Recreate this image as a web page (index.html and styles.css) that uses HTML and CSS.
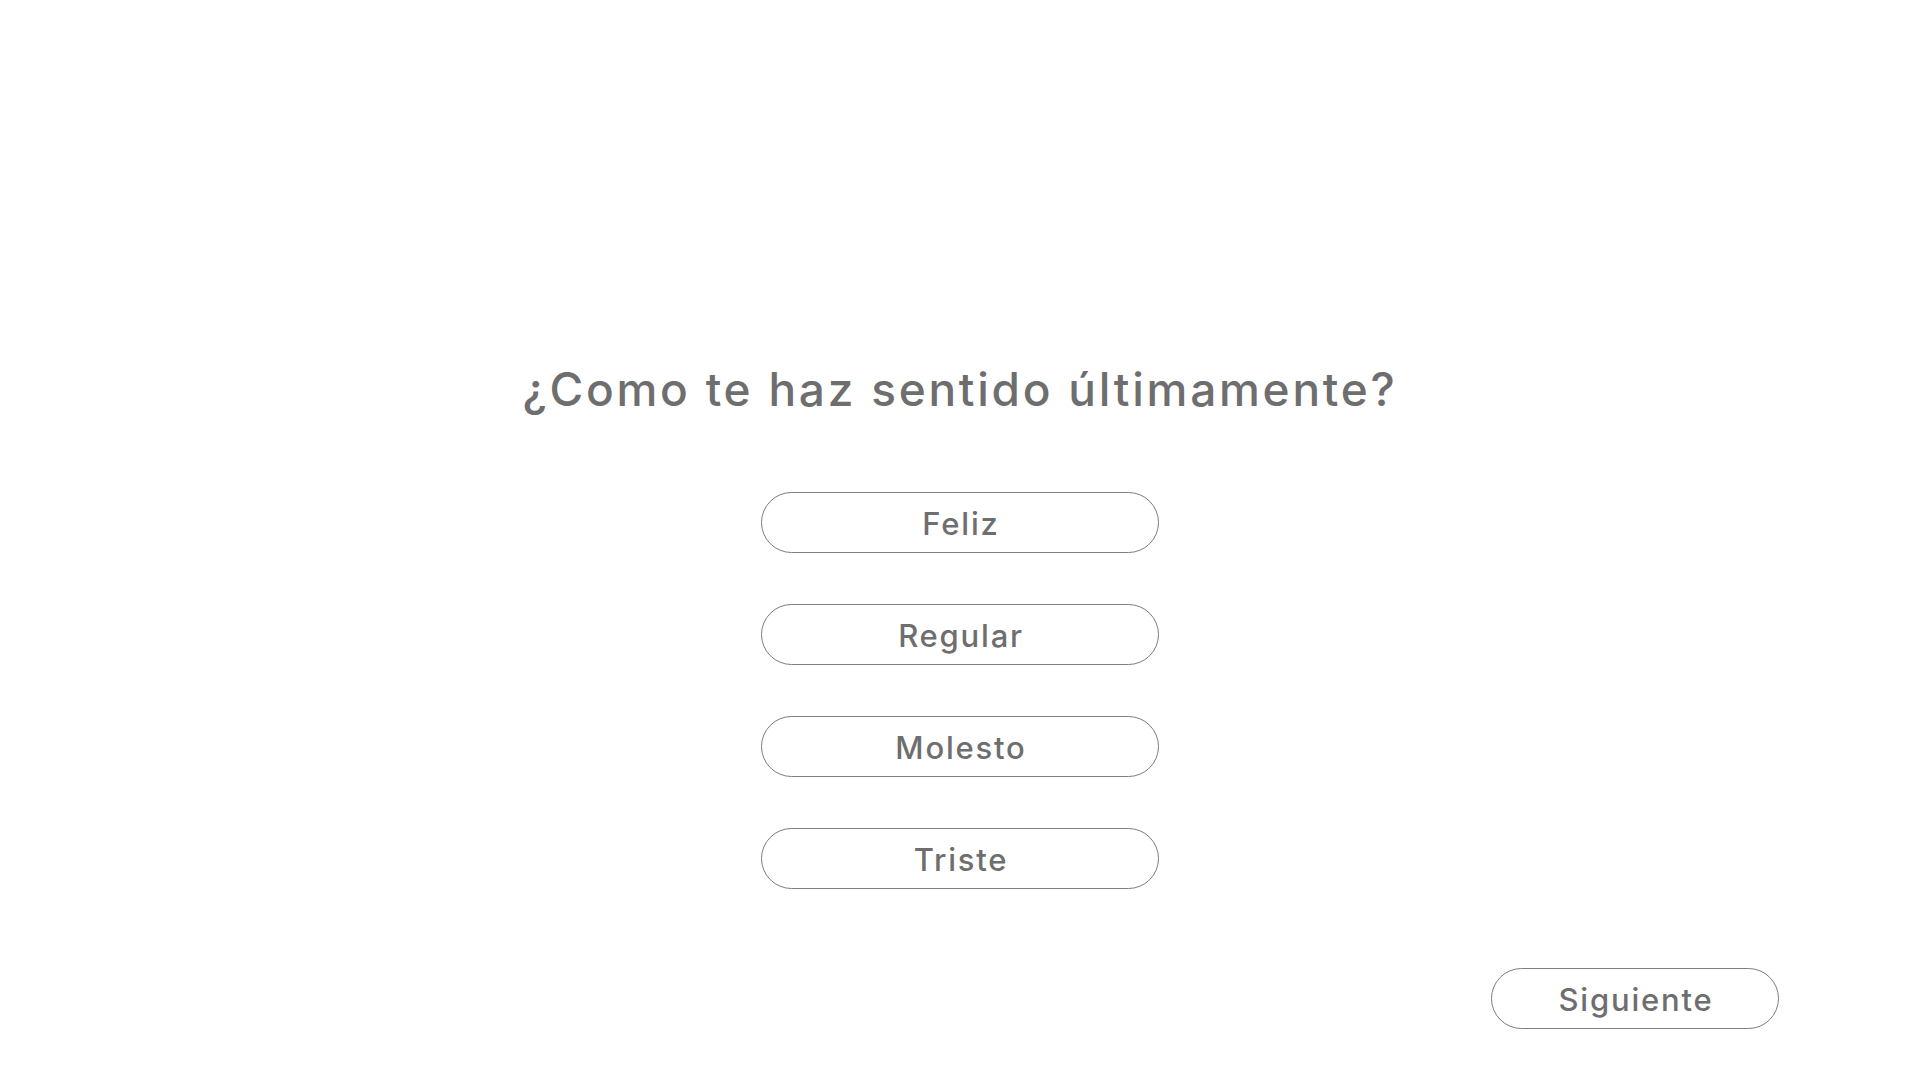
FILE: index.html
```html
<!DOCTYPE html>
<html lang="es">
<head>
<meta charset="utf-8">
<title>Encuesta</title>
<link rel="stylesheet" href="styles.css">
</head>
<body>
<main class="page">
  <h1 class="question">¿Como te haz sentido últimamente?</h1>
  <div class="options">
    <button class="pill option">Feliz</button>
    <button class="pill option">Regular</button>
    <button class="pill option">Molesto</button>
    <button class="pill option">Triste</button>
  </div>
  <div class="footer">
    <button class="pill next">Siguiente</button>
  </div>
</main>
</body>
</html>
```
FILE: styles.css
```css
html, body {
  margin: 0;
  padding: 0;
  background: #ffffff;
}
body {
  width: 1920px;
  height: 1080px;
  overflow: hidden;
  font-family: "Inter", "Open Sans", "Liberation Sans", sans-serif;
  color: #6e6e6e;
}
.page {
  display: flex;
  flex-direction: column;
  align-items: center;
  padding-top: 361px;
}
.question {
  margin: 0 0 75px 0;
  font-size: 46px;
  line-height: 56px;
  font-weight: 500;
  letter-spacing: 2.75px;
  color: #6e6e6e;
  text-align: center;
}
.options {
  display: flex;
  flex-direction: column;
  gap: 51px;
}
.pill {
  box-sizing: border-box;
  height: 61px;
  border: 1px solid #7d7d7d;
  border-radius: 31px;
  background: #ffffff;
  font-family: inherit;
  font-size: 31px;
  font-weight: 500;
  letter-spacing: 1.8px;
  color: #6e6e6e;
  padding: 2px 0 0 2px;
  display: flex;
  align-items: center;
  justify-content: center;
}
.option {
  width: 398px;
}
.footer {
  align-self: stretch;
  display: flex;
  justify-content: flex-end;
  padding-right: 141px;
  margin-top: 79px;
}
.next {
  width: 288px;
}
```
